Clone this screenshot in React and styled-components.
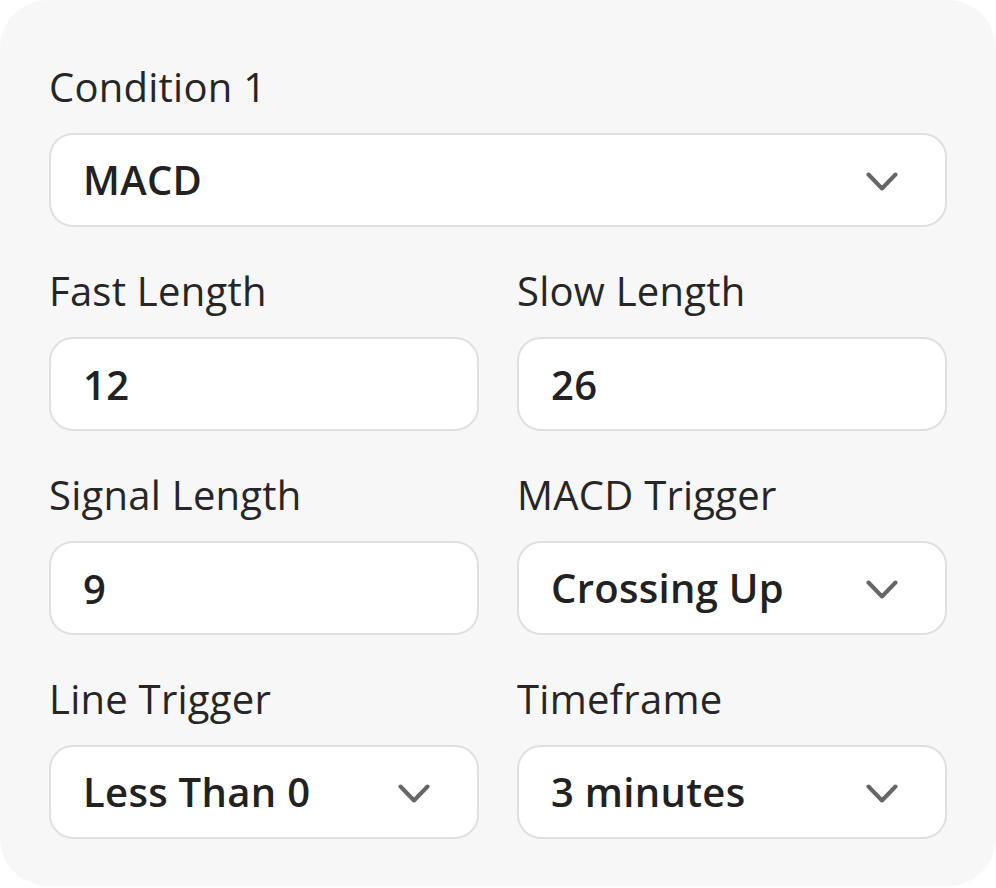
import React from "react";
import styled, { createGlobalStyle } from "styled-components";

const GlobalStyle = createGlobalStyle`
  html, body {
    margin: 0;
    padding: 0;
    background: #ffffff;
  }
  * {
    box-sizing: border-box;
  }
`;

const rows = [
  [{ label: "Condition 1", value: "MACD", select: true, wide: true }],
  [
    { label: "Fast Length", value: "12" },
    { label: "Slow Length", value: "26" },
  ],
  [
    { label: "Signal Length", value: "9" },
    { label: "MACD Trigger", value: "Crossing Up", select: true },
  ],
  [
    { label: "Line Trigger", value: "Less Than 0", select: true },
    { label: "Timeframe", value: "3 minutes", select: true },
  ],
];

const Chevron = () => (
  <ChevronIcon viewBox="0 0 32 20" aria-hidden="true">
    <path
      d="M2.5 2.5 L16 16.5 L29.5 2.5"
      fill="none"
      stroke="#666666"
      strokeWidth="4"
      strokeLinecap="round"
      strokeLinejoin="round"
    />
  </ChevronIcon>
);

const App = () => {
  return (
    <>
      <GlobalStyle />
      <Card>
        {rows.map((row, i) => (
          <Grid key={i}>
            {row.map((field) => (
              <Field key={field.label} $wide={field.wide}>
                <Label>{field.label}</Label>
                {field.select ? (
                  <Select>
                    <Value>{field.value}</Value>
                    <Chevron />
                  </Select>
                ) : (
                  <TextInput defaultValue={field.value} />
                )}
              </Field>
            ))}
          </Grid>
        ))}
      </Card>
    </>
  );
};

export default App;

const Card = styled.div`
  width: 996px;
  height: 886px;
  padding: 63px 49px 47px;
  background: #f7f7f7;
  border-radius: 48px;
  display: flex;
  flex-direction: column;
  gap: 40px;
  font-family: "Open Sans", "Noto Sans", sans-serif;
  color: #222222;
`;

const Grid = styled.div`
  display: grid;
  grid-template-columns: 1fr 1fr;
  column-gap: 38px;
`;

const Field = styled.div`
  display: flex;
  flex-direction: column;
  gap: 22px;
  grid-column: ${(p) => (p.$wide ? "1 / -1" : "auto")};
`;

const Label = styled.div`
  font-size: 40px;
  line-height: 48px;
  font-weight: 400;
  letter-spacing: 0.25px;
  color: #262626;
`;

const boxStyles = `
  height: 94px;
  width: 100%;
  background: #ffffff;
  border: 2px solid #e0e0e0;
  border-radius: 24px;
  font-family: "Open Sans", "Noto Sans", sans-serif;
  font-size: 40px;
  font-weight: 600;
  letter-spacing: 0.3px;
  color: #222222;
`;

const TextInput = styled.input`
  ${boxStyles}
  padding: 0 32px;
  outline: none;
  margin: 0;
`;

const Select = styled.div`
  ${boxStyles}
  display: flex;
  align-items: center;
  justify-content: space-between;
  padding: 0 47px 0 32px;
  cursor: pointer;
`;

const Value = styled.span`
  line-height: 1;
`;

const ChevronIcon = styled.svg`
  width: 32px;
  height: 20px;
  margin-top: 3px;
  flex-shrink: 0;
`;
